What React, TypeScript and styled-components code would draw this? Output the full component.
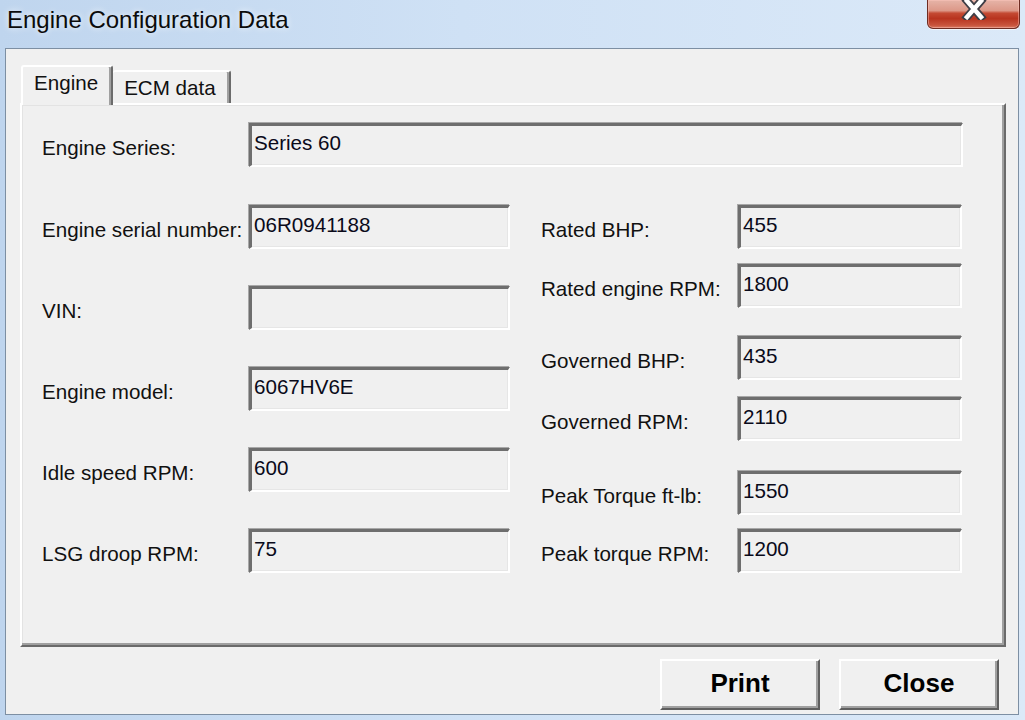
import React from "react";
import styled, { createGlobalStyle } from "styled-components";

const GlobalStyle = createGlobalStyle`
  html, body { margin: 0; padding: 0; }
  body { width: 1025px; height: 720px; overflow: hidden; background: #c9dcf2; }
`;

const FONT = `"Liberation Sans", Arial, sans-serif`;

const Window = styled.div`
  width: 1025px;
  height: 720px;
  display: flex;
  flex-direction: column;
  background: linear-gradient(90deg, #bfd5ee 0%, #cfe1f5 45%, #dbe9f8 100%);
  font-family: ${FONT};
  box-sizing: border-box;
`;

const TitleBar = styled.div`
  height: 48px;
  flex: none;
  display: flex;
  align-items: flex-start;
  padding-left: 7px;
  box-sizing: border-box;
`;

const Title = styled.div`
  margin-top: 6px;
  font-family: "Segoe UI", "Liberation Sans", Arial, sans-serif;
  font-size: 24px;
  line-height: 28px;
  color: #0b0b0b;
  text-shadow: 0 0 6px rgba(255, 255, 255, 0.9);
`;

const CloseX = styled.div`
  margin-left: auto;
  margin-right: 5px;
  width: 93px;
  height: 29px;
  box-sizing: border-box;
  border: 1px solid #6e2c22;
  border-top: none;
  border-radius: 0 0 6px 6px;
  background: linear-gradient(180deg, #e6b4a8 0%, #dc9888 38%, #c44a33 47%, #b8341f 66%, #c8543c 90%, #d87a62 100%);
  box-shadow: inset 0 0 0 1px rgba(255, 200, 190, 0.45), 0 1px 0 rgba(255, 255, 255, 0.6);
  display: flex;
  align-items: flex-start;
  justify-content: center;
`;

const Client = styled.div`
  flex: 1;
  margin: 0 6px 5px 5px;
  border: 1px solid #7d8fa3;
  background: #f0f0f0;
  display: flex;
  flex-direction: column;
  padding: 16px 12px 0 14px;
  box-sizing: border-box;
`;

const TabStrip = styled.div`
  display: flex;
  align-items: flex-end;
  height: 38px;
  padding-left: 1px;
  position: relative;
  z-index: 1;
`;

const Tab = styled.div<{ $active?: boolean }>`
  box-sizing: border-box;
  height: ${(p) => (p.$active ? 40 : 33)}px;
  margin-bottom: ${(p) => (p.$active ? -2 : 0)}px;
  padding: 4px 13px 0 11px;
  background: #f0f0f0;
  border-top: 2px solid #ffffff;
  border-left: ${(p) => (p.$active ? "2px solid #ffffff" : "none")};
  border-right: 2px solid #6b6b6b;
  box-shadow: inset -2px 0 0 #a0a0a0;
  border-radius: 3px 3px 0 0;
  font-size: 20.6px;
  line-height: 24px;
  color: #111;
  white-space: nowrap;
`;

const Panel = styled.div`
  height: 544px;
  box-sizing: border-box;
  border-top: 2px solid #ffffff;
  border-left: 2px solid #ffffff;
  border-right: 2px solid #6a6a6a;
  border-bottom: 2px solid #6a6a6a;
  box-shadow: inset -2px -2px 0 #a0a0a0, inset 1px 1px 0 #e3e3e3;
  padding: 18px 0 0 20px;
`;

const Columns = styled.div`
  display: flex;
  gap: 31px;
  margin-top: 38px;
`;

const Column = styled.div`
  display: flex;
  flex-direction: column;
`;

const Row = styled.div<{ $mt?: number }>`
  display: flex;
  align-items: flex-start;
  height: 44px;
  margin-top: ${(p) => p.$mt ?? 0}px;
`;

const Label = styled.div<{ $w: number }>`
  width: ${(p) => p.$w}px;
  flex: none;
  padding-top: 13px;
  font-size: 20.6px;
  line-height: 24px;
  color: #111;
  white-space: nowrap;
`;

const Field = styled.div<{ $w: number }>`
  width: ${(p) => p.$w}px;
  height: 44px;
  flex: none;
  box-sizing: border-box;
  background: #f0f0f0;
  border-top: 3px solid #6e6e6e;
  border-left: 3px solid #6e6e6e;
  border-bottom: 2px solid #ffffff;
  border-right: 2px solid #ffffff;
  box-shadow: inset -1px -1px 0 #e6e6e6, -1px -1px 0 #a8a8a8;
  padding: 5px 0 0 2px;
  font-size: 20.6px;
  line-height: 24px;
  color: #0a0a1a;
  white-space: nowrap;
`;

const ButtonRow = styled.div`
  display: flex;
  justify-content: flex-end;
  gap: 19px;
  margin-top: 12px;
  padding-right: 7px;
`;

const Button = styled.div`
  width: 160px;
  height: 51px;
  box-sizing: border-box;
  background: #f0f0f0;
  border-top: 2px solid #ffffff;
  border-left: 2px solid #ffffff;
  border-right: 2px solid #5f5f5f;
  border-bottom: 2px solid #5f5f5f;
  box-shadow: inset -2px -2px 0 #a0a0a0;
  display: flex;
  align-items: center;
  justify-content: center;
  font-size: 26px;
  font-weight: bold;
  color: #000;
  padding-bottom: 2px;
`;

type F = { label: string; value: string; mt?: number };

const left: F[] = [
  { label: "Engine serial number:", value: "06R0941188" },
  { label: "VIN:", value: "", mt: 37 },
  { label: "Engine model:", value: "6067HV6E", mt: 37 },
  { label: "Idle speed RPM:", value: "600", mt: 37 },
  { label: "LSG droop RPM:", value: "75", mt: 37 },
];

const right: F[] = [
  { label: "Rated BHP:", value: "455" },
  { label: "Rated engine RPM:", value: "1800", mt: 15 },
  { label: "Governed BHP:", value: "435", mt: 28 },
  { label: "Governed RPM:", value: "2110", mt: 17 },
  { label: "Peak Torque ft-lb:", value: "1550", mt: 30 },
  { label: "Peak torque RPM:", value: "1200", mt: 14 },
];

export default function App() {
  return (
    <>
      <GlobalStyle />
      <Window>
        <TitleBar>
          <Title>Engine Configuration Data</Title>
          <CloseX>
            <svg width="28" height="20" viewBox="0 0 28 20">
              <path d="M7 1 L21 17 M21 1 L7 17" stroke="#3d3d45" strokeWidth="8" strokeLinecap="square" fill="none" />
              <path d="M7 1 L21 17 M21 1 L7 17" stroke="#ffffff" strokeWidth="4.5" strokeLinecap="square" fill="none" />
            </svg>
          </CloseX>
        </TitleBar>
        <Client>
          <TabStrip>
            <Tab $active>Engine</Tab>
            <Tab>ECM data</Tab>
          </TabStrip>
          <Panel>
            <Row>
              <Label $w={207}>Engine Series:</Label>
              <Field $w={714}>Series 60</Field>
            </Row>
            <Columns>
              <Column>
                {left.map((f) => (
                  <Row key={f.label} $mt={f.mt}>
                    <Label $w={207}>{f.label}</Label>
                    <Field $w={261}>{f.value}</Field>
                  </Row>
                ))}
              </Column>
              <Column>
                {right.map((f) => (
                  <Row key={f.label} $mt={f.mt}>
                    <Label $w={197}>{f.label}</Label>
                    <Field $w={224}>{f.value}</Field>
                  </Row>
                ))}
              </Column>
            </Columns>
          </Panel>
          <ButtonRow>
            <Button>Print</Button>
            <Button>Close</Button>
          </ButtonRow>
        </Client>
      </Window>
    </>
  );
}
